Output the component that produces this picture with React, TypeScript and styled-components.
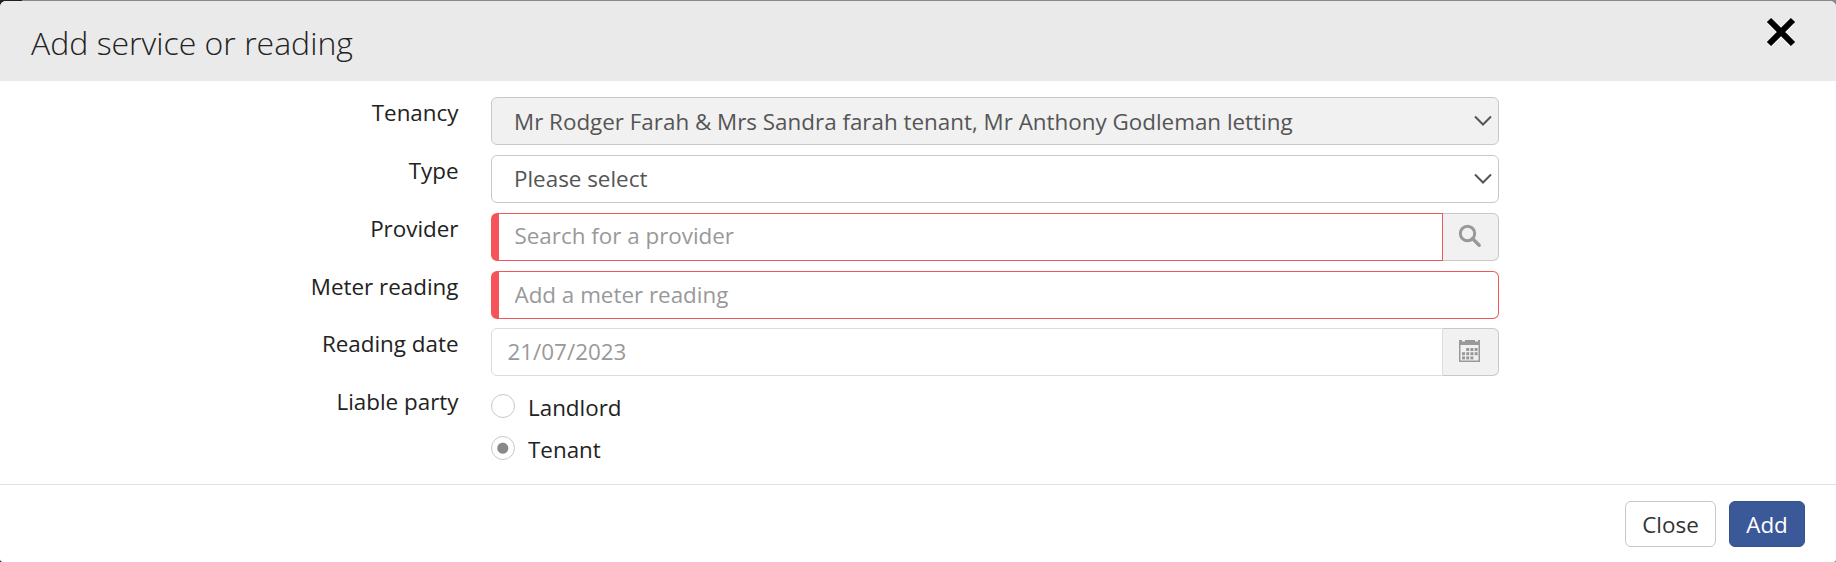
import React, { useState } from "react";
import styled, { createGlobalStyle } from "styled-components";

const GlobalStyle = createGlobalStyle`
  * { box-sizing: border-box; }
  html { background: #8a8788; }
  body { margin: 0; font-family: "Open Sans", sans-serif; font-size: 22.4px; color: #222; }
`;

const Backdrop = styled.div`
  height: 562px;
  padding-top: 1px;
  overflow: hidden;
  background: linear-gradient(to right, #231f20 22px, #8a8788 22px);
`;

const Dialog = styled.section`
  height: 561px;
  display: flex;
  flex-direction: column;
  background: #fff;
  border-radius: 6px 6px 3px 3px;
  overflow: hidden;
`;

const Header = styled.header`
  height: 80px;
  flex: none;
  display: flex;
  justify-content: space-between;
  align-items: flex-start;
  padding: 16px 40px 0 31px;
  background: #eaeaea;
`;

const Title = styled.h1`
  margin: 0;
  font-size: 32px;
  line-height: 52px;
  font-weight: 300;
  white-space: nowrap;
`;

const CloseIcon = styled.button`
  width: 30px;
  height: 30px;
  padding: 0;
  border: 0;
  background: none;
  svg { display: block; }
`;

const Form = styled.form`
  flex: none;
  height: 403px;
  padding: 16px 337px 0 0;
  display: flex;
  flex-direction: column;
  gap: 10px;
`;

const Row = styled.div<{ $short?: boolean }>`
  display: grid;
  grid-template-columns: 459px 1008px;
  column-gap: 32px;
  height: ${(p) => (p.$short ? 47 : 48)}px;
`;

const Label = styled.label`
  padding-right: 0.5px;
  text-align: right;
  line-height: 32px;
  white-space: nowrap;
`;

const Field = styled.div<{ $disabled?: boolean; $invalid?: boolean; $joined?: boolean; $pad?: number; $pale?: boolean }>`
  flex: 1;
  height: 48px;
  display: flex;
  justify-content: space-between;
  align-items: center;
  padding: 0 6px 0 ${(p) => p.$pad ?? 22}px;
  border: 1px solid ${(p) => (p.$invalid ? "#f55459" : p.$pale ? "#dcdcdc" : "#c8c8c8")};
  border-left-width: ${(p) => (p.$invalid ? 8 : 1)}px;
  border-radius: ${(p) => (p.$joined ? "6px 0 0 6px" : "6px")};
  background: ${(p) => (p.$disabled ? "#f1f1f1" : "#fff")};
  color: #555;
`;

const Value = styled.span<{ $drop?: number }>`
  line-height: 30px;
  white-space: nowrap;
  padding-top: ${(p) => p.$drop ?? 0}px;
`;

const Input = styled.input<{ $lift: number }>`
  width: 100%;
  height: 46px;
  padding: 0 0 ${(p) => p.$lift}px;
  border: 0;
  outline: 0;
  background: none;
  font: inherit;
  color: #999;
  &::placeholder { color: #999; opacity: 1; }
`;

const Group = styled.div`
  display: flex;
`;

const Addon = styled.span`
  width: 56px;
  height: 48px;
  display: flex;
  align-items: center;
  justify-content: center;
  padding: 0 2px 2px 0;
  border: 1px solid #c8c8c8;
  border-left: 0;
  border-radius: 0 6px 6px 0;
  background: #f1f1f1;
  color: #999;
`;

const Options = styled.div`
  display: flex;
  flex-direction: column;
  gap: 10px;
  padding-top: 4px;
`;

const Option = styled.label`
  display: flex;
  align-items: center;
  gap: 13px;
  height: 32px;
`;

const Radio = styled.span<{ $on: boolean }>`
  width: 24px;
  height: 24px;
  border: 1px solid #c8c8c8;
  border-radius: 50%;
  background: ${(p) => (p.$on ? "radial-gradient(circle at 10.8px 11.2px, #888 5px, #fff 6px)" : "#fff")};
`;

const OptionText = styled.span`
  line-height: 30px;
  padding-top: 4px;
`;

const Footer = styled.footer`
  flex: 1;
  display: flex;
  justify-content: flex-end;
  gap: 13px;
  padding: 16px 31px 0 0;
  border-top: 1px solid #e1e1e1;
`;

const Button = styled.button<{ $primary?: boolean }>`
  width: ${(p) => (p.$primary ? 76 : 91)}px;
  height: 46px;
  padding: 0;
  border: 1px solid ${(p) => (p.$primary ? "#34528a" : "#c8c8c8")};
  border-radius: 6px;
  background: ${(p) => (p.$primary ? "#3b5998" : "#fff")};
  color: ${(p) => (p.$primary ? "#fff" : "#333")};
  font: inherit;
`;

const Chevron = () => (
  <svg width="18" height="12" viewBox="0 0 18 12" fill="none" stroke="#555" strokeWidth="2">
    <path d="M1 1.5 9 9.5 17 1.5" />
  </svg>
);

const SearchIcon = () => (
  <svg width="24" height="24" viewBox="0 0 24 24" fill="none" stroke="currentColor">
    <circle cx="9.5" cy="9.5" r="7.2" strokeWidth="3" />
    <path d="m14.5 14.5 6.7 6.7" strokeWidth="3.4" strokeLinecap="round" />
  </svg>
);

const dots = [[1, 0], [2, 0], [3, 0], [0, 1], [1, 1], [2, 1], [3, 1], [0, 2], [1, 2], [2, 2]];

const CalendarIcon = () => (
  <svg width="22" height="24" viewBox="0 0 22 24" fill="currentColor">
    <path d="M0 1h3v1.5h3V1h10v1.5h3V1h2v22H0zM1.5 6v15.5h18V6z" fillRule="evenodd" />
    {dots.map(([x, y]) => (
      <rect key={`${x}-${y}`} x={3 + x * 4.2} y={9 + y * 4.2} width="3" height="3" />
    ))}
  </svg>
);

export default function App() {
  const [party, setParty] = useState("Tenant");
  return (
    <>
      <GlobalStyle />
      <Backdrop>
        <Dialog>
          <Header>
            <Title>Add service or reading</Title>
            <CloseIcon aria-label="Close dialog">
              <svg width="30" height="30" viewBox="0 0 30 30">
                <path d="M4 4 26 26M26 4 4 26" stroke="#fff" strokeWidth="6" transform="translate(0 1)" />
                <path d="M3 3 27 27M27 3 3 27" stroke="#000" strokeWidth="6" />
              </svg>
            </CloseIcon>
          </Header>
          <Form>
            <Row>
              <Label>Tenancy</Label>
              <Field $disabled>
                <Value $drop={2}>Mr Rodger Farah &amp; Mrs Sandra farah tenant, Mr Anthony Godleman letting</Value>
                <Chevron />
              </Field>
            </Row>
            <Row>
              <Label>Type</Label>
              <Field>
                <Value>Please select</Value>
                <Chevron />
              </Field>
            </Row>
            <Row>
              <Label>Provider</Label>
              <Group>
                <Field $invalid $joined $pad={15.5}>
                  <Input $lift={3} placeholder="Search for a provider" />
                </Field>
                <Addon><SearchIcon /></Addon>
              </Group>
            </Row>
            <Row $short>
              <Label>Meter reading</Label>
              <Field $invalid $pad={15.5}>
                <Input $lift={1} placeholder="Add a meter reading" />
              </Field>
            </Row>
            <Row>
              <Label>Reading date</Label>
              <Group>
                <Field $joined $pale $pad={15.5}>
                  <Input $lift={2} defaultValue="21/07/2023" />
                </Field>
                <Addon><CalendarIcon /></Addon>
              </Group>
            </Row>
            <Row>
              <Label>Liable party</Label>
              <Options>
                {["Landlord", "Tenant"].map((name) => (
                  <Option key={name} onClick={() => setParty(name)}>
                    <Radio $on={party === name} />
                    <OptionText>{name}</OptionText>
                  </Option>
                ))}
              </Options>
            </Row>
          </Form>
          <Footer>
            <Button>Close</Button>
            <Button $primary>Add</Button>
          </Footer>
        </Dialog>
      </Backdrop>
    </>
  );
}
